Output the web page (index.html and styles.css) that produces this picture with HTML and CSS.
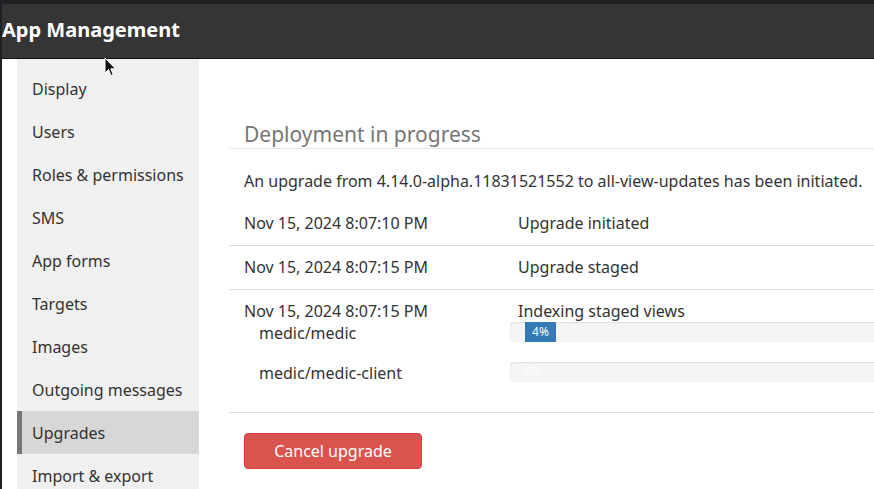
FILE: index.html
```
<!DOCTYPE html>
<html>
<head>
<meta charset="utf-8">
<link rel="stylesheet" href="styles.css">
</head>
<body>
<div class="frame">
  <header class="topbar"><h1 class="title">App Management</h1></header>
  <div class="main">
    <nav class="sidebar">
      <a class="nav-item">Display</a>
      <a class="nav-item">Users</a>
      <a class="nav-item">Roles &amp; permissions</a>
      <a class="nav-item">SMS</a>
      <a class="nav-item">App forms</a>
      <a class="nav-item">Targets</a>
      <a class="nav-item">Images</a>
      <a class="nav-item">Outgoing messages</a>
      <a class="nav-item active">Upgrades</a>
      <a class="nav-item">Import &amp; export</a>
    </nav>
    <section class="content">
      <h2 class="heading">Deployment in progress</h2>
      <p class="intro">An upgrade from 4.14.0-alpha.11831521552 to all-view-updates has been initiated.</p>
      <div class="log">
        <div class="row">
          <div class="c-date">Nov 15, 2024 8:07:10 PM</div>
          <div class="c-msg">Upgrade initiated</div>
        </div>
        <div class="row">
          <div class="c-date">Nov 15, 2024 8:07:15 PM</div>
          <div class="c-msg">Upgrade staged</div>
        </div>
        <div class="row row-last">
          <div class="c-date">Nov 15, 2024 8:07:15 PM</div>
          <div class="c-msg">Indexing staged views</div>
          <div class="sub">
            <div class="sub-name">medic/medic</div>
            <div class="progress"><div class="progress-bar" style="width:31px">4%</div></div>
          </div>
          <div class="sub">
            <div class="sub-name">medic/medic-client</div>
            <div class="progress"><div class="progress-bar zero">0%</div></div>
          </div>
        </div>
      </div>
      <button class="btn-cancel">Cancel upgrade</button>
    </section>
  </div>
  <svg class="cursor" width="13" height="20" viewBox="0 0 13 20"><path d="M1 1 L1 16 L4.5 12.5 L7 18.5 L9.2 17.6 L6.8 11.8 L11.5 11.8 Z" fill="#111" stroke="#fff" stroke-width="1"/></svg>
</div>
</body>
</html>
```
FILE: styles.css
```
html, body {
  margin: 0;
  padding: 0;
  height: 100%;
  overflow: hidden;
}
body {
  background: #1f2024;
  font-family: "Noto Sans", "Open Sans", sans-serif;
  color: #333;
}
.frame {
  position: relative;
  margin: 4px 0 0 2px;
  height: calc(100% - 4px);
  display: flex;
  flex-direction: column;
  overflow: hidden;
}
.topbar {
  height: 54px;
  background: #353535;
  border-bottom: 1px solid #111;
  display: flex;
  align-items: center;
  flex-shrink: 0;
}
.title {
  margin: 0 0 2px;
  color: #fff;
  font-size: 20px;
  font-weight: 700;
  line-height: 28px;
}
.main {
  flex: 1;
  background: #fff;
  display: flex;
  overflow: hidden;
}
.sidebar {
  margin-left: 15px;
  width: 182px;
  flex-shrink: 0;
  background: #f0f0f0;
  padding-top: 8px;
  display: flex;
  flex-direction: column;
}
.nav-item {
  height: 43px;
  display: flex;
  align-items: center;
  padding-left: 15px;
  box-sizing: border-box;
  font-size: 16px;
  color: #333;
  flex-shrink: 0;
}
.nav-item.active {
  background: #d7d7d7;
  border-left: 5px solid #777;
  padding-left: 10px;
}
.content {
  flex: 1;
  margin-left: 30px;
  min-width: 700px;
}
.heading {
  margin: 61px 0 0;
  padding-left: 15px;
  font-size: 21px;
  font-weight: 400;
  line-height: 28px;
  color: #767676;
  border-bottom: 1px solid #e5e5e5;
}
.intro {
  margin: 21px 0 0;
  padding-left: 15px;
  font-size: 16px;
  line-height: 22px;
}
.log {
  margin-top: 10px;
}
.row {
  display: grid;
  grid-template-columns: 274px 1fr;
  border-bottom: 1px solid #ddd;
  padding: 10px 0 11px;
  font-size: 16px;
  line-height: 22px;
}
.row-last {
  padding-bottom: 10px;
}
.c-date {
  padding-left: 15px;
}
.c-msg {
  padding-left: 15px;
}
.sub {
  grid-column: 1 / 3;
  display: grid;
  grid-template-columns: 281px 1fr;
  height: 40px;
}
.sub-name {
  padding-left: 30px;
  line-height: 22px;
}
.progress {
  height: 20px;
  background: #f5f5f5;
  border-radius: 4px;
  box-shadow: inset 0 1px 2px rgba(0,0,0,0.1);
  overflow: hidden;
  display: flex;
}
.progress-bar {
  margin-left: 15px;
  height: 20px;
  background: #337ab7;
  color: #fff;
  font-size: 12px;
  line-height: 20px;
  text-align: center;
}
.progress-bar.zero {
  background: transparent;
  color: #fcfcfc;
  text-align: left;
}
.btn-cancel {
  margin: 20px 0 0 15px;
  width: 178px;
  height: 36px;
  background: #d9534f;
  border: 1px solid #d43f3a;
  border-radius: 4px;
  color: #fff;
  font-family: "Noto Sans", "Open Sans", sans-serif;
  font-size: 16px;
  padding: 0;
}
.cursor {
  position: absolute;
  left: 102px;
  top: 53px;
}
```
